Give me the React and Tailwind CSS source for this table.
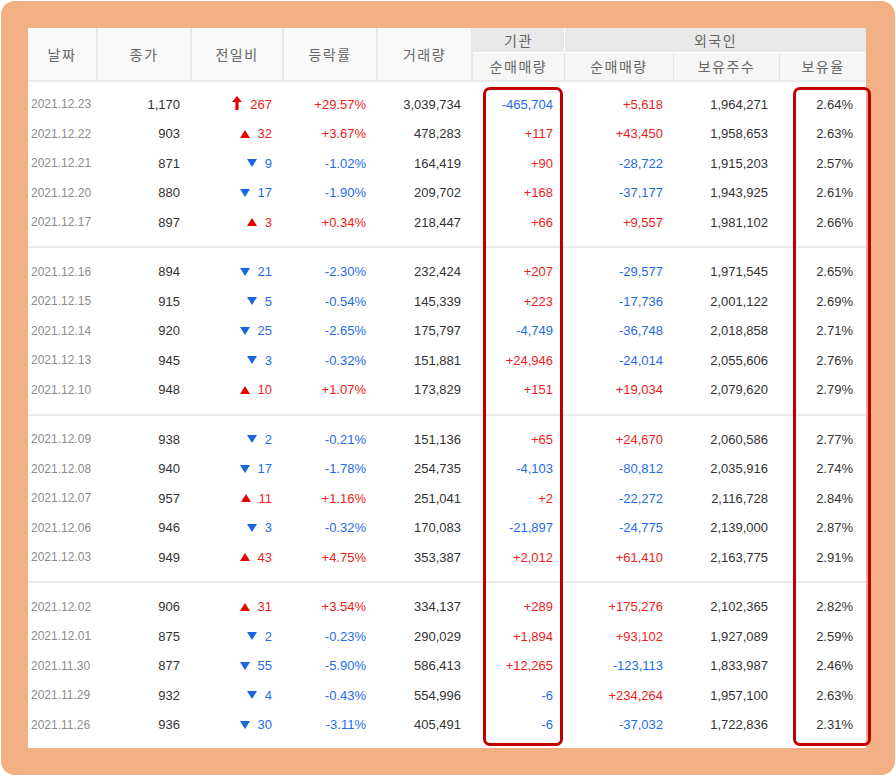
import React from 'react';

const RED = 'text-[#ef1c1c]';
const BLUE = 'text-[#1f6ce6]';

// columns: 날짜, 종가, 전일비, 등락률, 거래량, 기관 순매매량, 외국인 순매매량, 보유주수, 보유율
const rows = [
  [
    ['2021.12.23', '1,170', 'limit', '267', '+29.57%', '3,039,734', '-465,704', '+5,618', '1,964,271', '2.64%'],
    ['2021.12.22', '903', 'up', '32', '+3.67%', '478,283', '+117', '+43,450', '1,958,653', '2.63%'],
    ['2021.12.21', '871', 'down', '9', '-1.02%', '164,419', '+90', '-28,722', '1,915,203', '2.57%'],
    ['2021.12.20', '880', 'down', '17', '-1.90%', '209,702', '+168', '-37,177', '1,943,925', '2.61%'],
    ['2021.12.17', '897', 'up', '3', '+0.34%', '218,447', '+66', '+9,557', '1,981,102', '2.66%'],
  ],
  [
    ['2021.12.16', '894', 'down', '21', '-2.30%', '232,424', '+207', '-29,577', '1,971,545', '2.65%'],
    ['2021.12.15', '915', 'down', '5', '-0.54%', '145,339', '+223', '-17,736', '2,001,122', '2.69%'],
    ['2021.12.14', '920', 'down', '25', '-2.65%', '175,797', '-4,749', '-36,748', '2,018,858', '2.71%'],
    ['2021.12.13', '945', 'down', '3', '-0.32%', '151,881', '+24,946', '-24,014', '2,055,606', '2.76%'],
    ['2021.12.10', '948', 'up', '10', '+1.07%', '173,829', '+151', '+19,034', '2,079,620', '2.79%'],
  ],
  [
    ['2021.12.09', '938', 'down', '2', '-0.21%', '151,136', '+65', '+24,670', '2,060,586', '2.77%'],
    ['2021.12.08', '940', 'down', '17', '-1.78%', '254,735', '-4,103', '-80,812', '2,035,916', '2.74%'],
    ['2021.12.07', '957', 'up', '11', '+1.16%', '251,041', '+2', '-22,272', '2,116,728', '2.84%'],
    ['2021.12.06', '946', 'down', '3', '-0.32%', '170,083', '-21,897', '-24,775', '2,139,000', '2.87%'],
    ['2021.12.03', '949', 'up', '43', '+4.75%', '353,387', '+2,012', '+61,410', '2,163,775', '2.91%'],
  ],
  [
    ['2021.12.02', '906', 'up', '31', '+3.54%', '334,137', '+289', '+175,276', '2,102,365', '2.82%'],
    ['2021.12.01', '875', 'down', '2', '-0.23%', '290,029', '+1,894', '+93,102', '1,927,089', '2.59%'],
    ['2021.11.30', '877', 'down', '55', '-5.90%', '586,413', '+12,265', '-123,113', '1,833,987', '2.46%'],
    ['2021.11.29', '932', 'down', '4', '-0.43%', '554,996', '-6', '+234,264', '1,957,100', '2.63%'],
    ['2021.11.26', '936', 'down', '30', '-3.11%', '405,491', '-6', '-37,032', '1,722,836', '2.31%'],
  ],
];

const signColor = (v) => (v.startsWith('+') ? RED : v.startsWith('-') ? BLUE : 'text-[#333]');

function Arrow({ kind }) {
  if (kind === 'limit') {
    return (
      <svg width="10" height="14" viewBox="0 0 10 14" className="mb-[2px]">
        <path d="M5 0 L10 6 L6.6 6 L6.6 14 L3.4 14 L3.4 6 L0 6 Z" fill="#e60000" />
      </svg>
    );
  }
  if (kind === 'up') {
    return (
      <svg width="10" height="8" viewBox="0 0 10 8">
        <path d="M5 0 L10 8 L0 8 Z" fill="#e60000" />
      </svg>
    );
  }
  return (
    <svg width="10" height="8" viewBox="0 0 10 8">
      <path d="M0 0 L10 0 L5 8 Z" fill="#1a66e0" />
    </svg>
  );
}

function Row({ r }) {
  const [date, close, dir, diff, rate, vol, inst, frg, hold, ratio] = r;
  const diffColor = dir === 'down' ? BLUE : RED;
  return (
    <div className="flex h-[29.5px] items-center text-[13px] text-[#333]">
      <div className="w-[70px] pl-[3px] text-[12px] text-[#8c8c8c]">{date}</div>
      <div className="w-[94px] pr-3 text-right">{close}</div>
      <div className={`w-[92px] pr-3 flex items-center justify-end gap-[8px] ${diffColor}`}>
        <Arrow kind={dir} />
        <span>{diff}</span>
      </div>
      <div className={`w-[94px] pr-3 text-right ${signColor(rate)}`}>{rate}</div>
      <div className="w-[95px] pr-3 text-right">{vol}</div>
      <div className={`w-[92px] pr-3 text-right ${signColor(inst)}`}>{inst}</div>
      <div className={`w-[109px] pr-[11px] text-right ${signColor(frg)}`}>{frg}</div>
      <div className="w-[106px] pr-3 text-right">{hold}</div>
      <div className="w-[86px] pr-[13px] text-right">{ratio}</div>
    </div>
  );
}

const single = ['날짜', '종가', '전일비', '등락률', '거래량'];
const singleW = ['w-[70px]', 'w-[94px]', 'w-[92px]', 'w-[94px]', 'w-[95px]'];

export default function App() {
  return (
    <div className="w-[896px] h-[776px] bg-white p-px" style={{ fontFamily: '"Liberation Sans", "Noto Sans CJK KR", sans-serif' }}>
      <div className="relative w-[894px] h-[774px] rounded-[14px] bg-[#f3b084] pl-[27px] pt-[27px]">
        <div className="w-[838px] h-[720px] bg-white">
          {/* header */}
          <div className="flex h-[54px] border-b-[2px] border-[#ebebeb] text-[14px] tracking-[1.5px] text-[#666]" style={{ fontFamily: '"Noto Sans CJK KR", sans-serif' }}>
            {single.map((h, i) => (
              <div key={h} className={`${singleW[i]} flex items-center justify-center bg-[#f9f9f9] border-r-[2px] border-[#e8e8e8]`}>
                {h}
              </div>
            ))}
            <div className="flex flex-col w-[92px]">
              <div className="h-[25px] flex items-center justify-center bg-[#e9e9e9] border-r border-white border-b border-b-white">기관</div>
              <div className="flex-1 flex items-center justify-center bg-[#f6f6f6] border-r border-[#e4e4e4]">순매매량</div>
            </div>
            <div className="flex flex-col w-[301px]">
              <div className="h-[25px] flex items-center justify-center bg-[#e9e9e9] border-b border-white">외국인</div>
              <div className="flex-1 flex">
                <div className="w-[109px] flex items-center justify-center bg-[#f6f6f6] border-r border-[#e4e4e4]">순매매량</div>
                <div className="w-[106px] flex items-center justify-center bg-[#f6f6f6] border-r border-[#e4e4e4]">보유주수</div>
                <div className="w-[86px] flex items-center justify-center bg-[#f6f6f6]">보유율</div>
              </div>
            </div>
          </div>

          {/* body */}
          {rows.map((g, gi) => (
            <div
              key={gi}
              className={
                gi === 0
                  ? 'pt-[7.5px] pb-[9px] border-b-[2px] border-[#ebebeb]'
                  : gi === 3
                  ? 'pt-[9px]'
                  : 'pt-[9px] pb-[9px] border-b-[2px] border-[#ebebeb]'
              }
            >
              {g.map((r) => (
                <Row key={r[0]} r={r} />
              ))}
            </div>
          ))}
        </div>

        {/* highlight boxes */}
        <div className="absolute left-[482px] top-[86px] w-[80px] h-[659px] rounded-[7px] border-[3px] border-[#c00000]" />
        <div className="absolute left-[792px] top-[86px] w-[78px] h-[659px] rounded-[7px] border-[3px] border-[#c00000]" />
      </div>
    </div>
  );
}
